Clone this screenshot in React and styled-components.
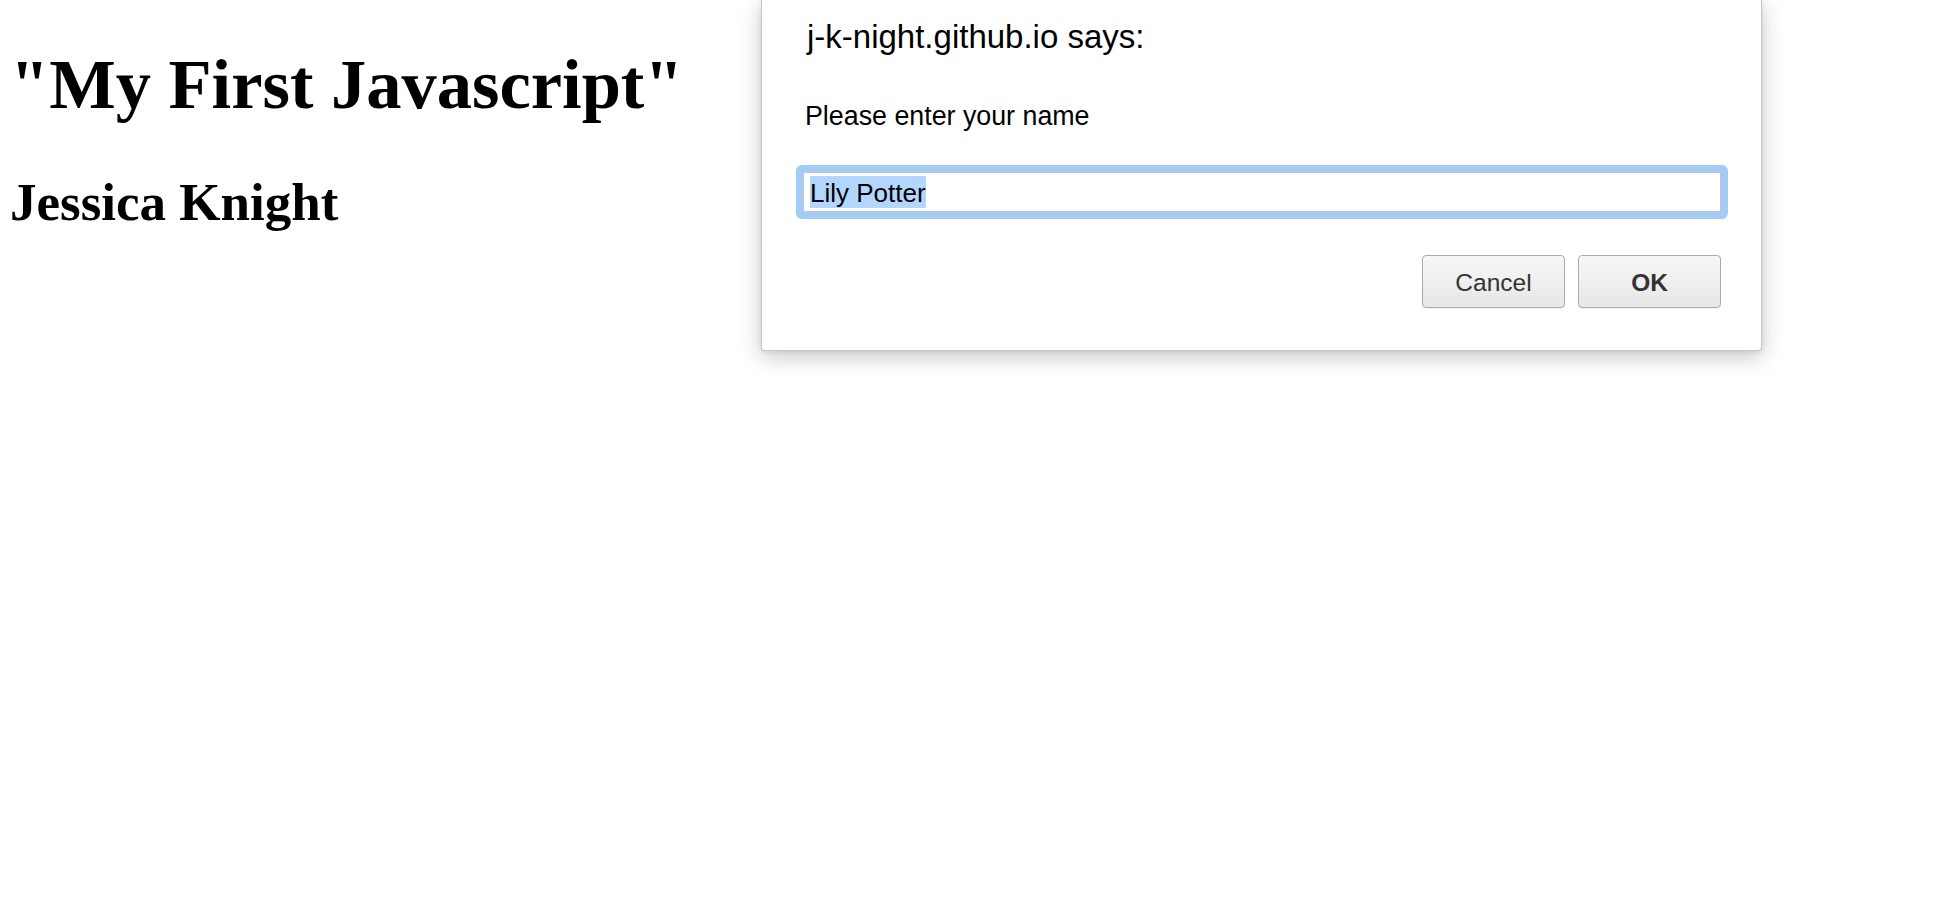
import React from 'react';
import styled, { createGlobalStyle } from 'styled-components';

const GlobalStyle = createGlobalStyle`
  html, body {
    margin: 0;
    padding: 0;
    background: #fff;
  }
  body {
    font-family: "Liberation Serif", "Times New Roman", serif;
    color: #000;
  }
`;

const Page = styled.div`
  position: relative;
  min-height: 898px;
  padding: 0 10px;
  overflow: hidden;
`;

const Title = styled.h1`
  margin: 44px 0 0;
  font-size: 70.5px;
  line-height: 80px;
  font-weight: bold;
`;

const Author = styled.h2`
  margin: 48px 0 0;
  font-size: 53px;
  line-height: 60px;
  font-weight: bold;
`;

// the prompt box sits over the page, cut off at the top edge
const Dialog = styled.div`
  position: absolute;
  top: 0;
  left: 761px;
  width: 1001px;
  box-sizing: border-box;
  padding: 17px 33px 42px 34px;
  background: #fff;
  border: 1px solid rgba(0, 0, 0, 0.22);
  border-top: none;
  border-radius: 0 0 4px 4px;
  box-shadow: 0 6px 22px rgba(0, 0, 0, 0.22), 0 1px 4px rgba(0, 0, 0, 0.08);
  font-family: "Liberation Sans", Arial, Helvetica, sans-serif;
  color: #000;
`;

const DialogTitle = styled.div`
  margin-left: 11px;
  font-size: 33px;
  line-height: 40px;
`;

const Message = styled.div`
  margin: 43px 0 0 9px;
  font-size: 26.8px;
  line-height: 32px;
`;

const FocusRing = styled.div`
  margin-top: 33px;
  padding: 7px;
  background: #a2cbf8;
  border-radius: 6px;
`;

const Field = styled.div`
  box-sizing: border-box;
  height: 40px;
  padding: 3px 6px 0;
  background: #fff;
  border: 1px solid #c6c6c6;
  font-size: 26px;
`;

const Selected = styled.span`
  display: inline-block;
  height: 32px;
  padding-top: 1px;
  box-sizing: border-box;
  line-height: 32px;
  background: #b3d6fe;
  color: #000;
`;

const ButtonRow = styled.div`
  display: flex;
  justify-content: flex-end;
  gap: 13px;
  margin-top: 36px;
  padding-right: 7px;
`;

const Button = styled.button`
  width: 143px;
  height: 53px;
  padding: 2px 0 0;
  border: 1.5px solid #ababab;
  border-radius: 4px;
  background: linear-gradient(#f7f7f7, #e7e7e7);
  box-shadow: 0 1px 1px rgba(0, 0, 0, 0.06);
  font-family: "Liberation Sans", Arial, Helvetica, sans-serif;
  font-size: 24.5px;
  font-weight: ${(p) => (p.$primary ? 'bold' : 'normal')};
  color: #333;
  cursor: pointer;
`;

export default function App() {
  return (
    <>
      <GlobalStyle />
      <Page>
        <Title>"My First Javascript"</Title>
        <Author>Jessica Knight</Author>

        <Dialog>
          <DialogTitle>j-k-night.github.io says:</DialogTitle>
          <Message>Please enter your name</Message>
          <FocusRing>
            <Field>
              <Selected>Lily Potter</Selected>
            </Field>
          </FocusRing>
          <ButtonRow>
            <Button>Cancel</Button>
            <Button $primary>OK</Button>
          </ButtonRow>
        </Dialog>
      </Page>
    </>
  );
}
